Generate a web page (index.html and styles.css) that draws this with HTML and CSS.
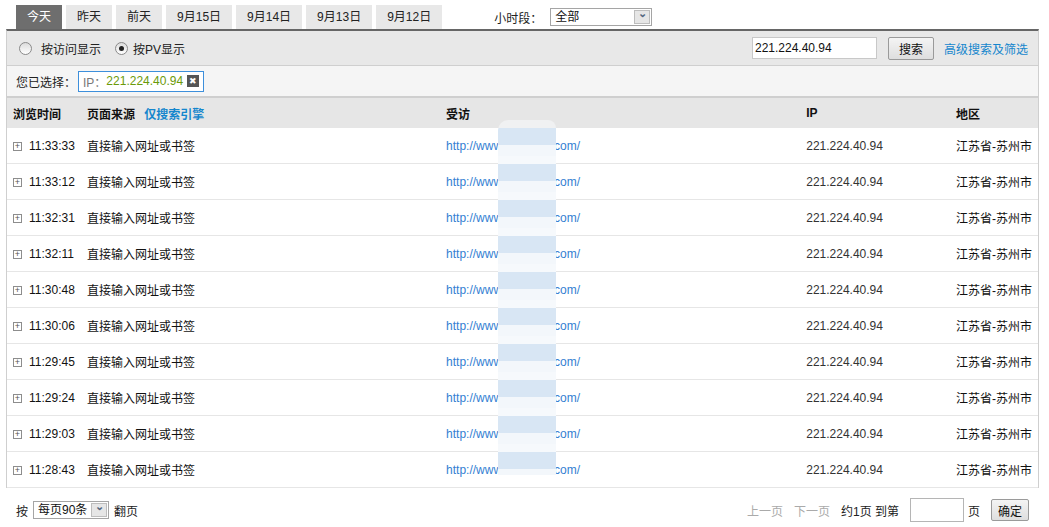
FILE: index.html
```html
<!DOCTYPE html>
<html lang="zh-CN">
<head>
  <meta charset="UTF-8" />
  <title>访问明细</title>
  <link rel="stylesheet" href="styles.css">
</head>
<body>
  <div class="tabs">
    <a href="#" class="tab active">今天</a>
    <a href="#" class="tab">昨天</a>
    <a href="#" class="tab">前天</a>
    <a href="#" class="tab">9月15日</a>
    <a href="#" class="tab">9月14日</a>
    <a href="#" class="tab">9月13日</a>
    <a href="#" class="tab">9月12日</a>
    <div class="hour">
      <span>小时段：</span>
      <div class="fake-select wide"><span class="val">全部</span><span class="arrow">&#x2304;</span></div>
    </div>
  </div>

  <div class="box">
    <div class="bar1">
      <label class="radio"><span class="dot"></span>按访问显示</label>
      <label class="radio on"><span class="dot"></span>按PV显示</label>
      <div class="search">
        <input type="text" class="kw" value="221.224.40.94">
        <button class="btn">搜索</button>
        <a href="#" class="adv">高级搜索及筛选</a>
      </div>
    </div>
    <div class="bar2">
      <span>您已选择：</span>
      <span class="chip"><span class="k">IP：</span><span class="v">221.224.40.94</span><span class="del">&#x2716;</span></span>
    </div>

    <div class="list">
      <table class="table">
        <thead>
          <tr>
            <th class="c1">浏览时间</th>
            <th class="c2">页面来源 <a href="#" class="se">仅搜索引擎</a></th>
            <th class="c3">受访</th>
            <th class="c4">IP</th>
            <th class="c5">地区</th>
          </tr>
        </thead>
        <tbody>
          <tr><td><span class="plus">+</span>11:33:33</td><td>直接输入网址或书签</td><td class="url">http://www<span class="gap"></span>com/</td><td class="ip">221.224.40.94</td><td>江苏省-苏州市</td></tr>
          <tr><td><span class="plus">+</span>11:33:12</td><td>直接输入网址或书签</td><td class="url">http://www<span class="gap"></span>com/</td><td class="ip">221.224.40.94</td><td>江苏省-苏州市</td></tr>
          <tr><td><span class="plus">+</span>11:32:31</td><td>直接输入网址或书签</td><td class="url">http://www<span class="gap"></span>com/</td><td class="ip">221.224.40.94</td><td>江苏省-苏州市</td></tr>
          <tr><td><span class="plus">+</span>11:32:11</td><td>直接输入网址或书签</td><td class="url">http://www<span class="gap"></span>com/</td><td class="ip">221.224.40.94</td><td>江苏省-苏州市</td></tr>
          <tr><td><span class="plus">+</span>11:30:48</td><td>直接输入网址或书签</td><td class="url">http://www<span class="gap"></span>com/</td><td class="ip">221.224.40.94</td><td>江苏省-苏州市</td></tr>
          <tr><td><span class="plus">+</span>11:30:06</td><td>直接输入网址或书签</td><td class="url">http://www<span class="gap"></span>com/</td><td class="ip">221.224.40.94</td><td>江苏省-苏州市</td></tr>
          <tr><td><span class="plus">+</span>11:29:45</td><td>直接输入网址或书签</td><td class="url">http://www<span class="gap"></span>com/</td><td class="ip">221.224.40.94</td><td>江苏省-苏州市</td></tr>
          <tr><td><span class="plus">+</span>11:29:24</td><td>直接输入网址或书签</td><td class="url">http://www<span class="gap"></span>com/</td><td class="ip">221.224.40.94</td><td>江苏省-苏州市</td></tr>
          <tr><td><span class="plus">+</span>11:29:03</td><td>直接输入网址或书签</td><td class="url">http://www<span class="gap"></span>com/</td><td class="ip">221.224.40.94</td><td>江苏省-苏州市</td></tr>
          <tr><td><span class="plus">+</span>11:28:43</td><td>直接输入网址或书签</td><td class="url">http://www<span class="gap"></span>com/</td><td class="ip">221.224.40.94</td><td>江苏省-苏州市</td></tr>
        </tbody>
      </table>
      <!-- 打码区域 -->
      <div class="blur"></div>
    </div>
  </div>

  <div class="footer">
    <div class="per">
      <span>按</span>
      <div class="fake-select small"><span class="val">每页90条</span><span class="arrow">&#x2304;</span></div>
      <span>翻页</span>
    </div>
    <div class="pager">
      <span class="off">上一页</span>
      <span class="off">下一页</span>
      <span>约1页 到第</span>
      <input type="text" class="pg">
      <span>页</span>
      <button class="btn ok">确定</button>
    </div>
  </div>
</body>
</html>
```

FILE: styles.css
```css
body {
  margin: 0; font-family: "Liberation Sans", Arial, "Noto Sans CJK SC", sans-serif;
  font-size: 12px; color: #222; background: white;
}
a { text-decoration: none; }

.tabs {
  display: flex; align-items: flex-end; gap: 4px;
  padding: 5px 0 0 16px; height: 24px;
}
.tab {
  height: 24px; line-height: 24px; padding: 0 11px; background: #e8e8e8;
  color: #222; font-size: 12px;
}
.tab.active { background: #6e6e6e; color: white; }
.hour {
  display: flex; align-items: center; gap: 8px; margin-left: 48px;
  align-self: flex-start; margin-top: 3px;
}

.fake-select {
  display: flex; align-items: center; height: 16px; border: 1px solid #a5a5a5;
  background: white; box-sizing: content-box;
}
.fake-select .val { flex: 1; padding-left: 4px; color: #111; line-height: 16px; }
.fake-select .arrow {
  width: 16px; height: 14px; margin-right: 1px; background: #e6e6e6; border: 1px solid #bdbdbd;
  box-sizing: border-box; color: #55677f; font-size: 11px; line-height: 5px; text-align: center;
  font-weight: bold;
}
.fake-select.wide { width: 100px; }
.fake-select.small { width: 74px; }

.box {
  margin-left: 6px; width: 1033px; box-sizing: border-box;
  border-top: 2px solid #666; border-left: 1px solid #cfcfcf; border-right: 1px solid #cfcfcf;
}
.bar1 {
  height: 34px; background: #e8e8e8; border-bottom: 1px solid #cfcfcf;
  display: flex; align-items: center; padding-left: 12px;
}
.radio { display: flex; align-items: center; color: #222; margin-right: 14px; }
.radio .dot {
  width: 11px; height: 11px; border: 1px solid #8a8a8a; border-radius: 50%;
  background: linear-gradient(#dcdcdc, #fff); margin-right: 9px; position: relative;
}
.radio.on .dot { margin-right: 5px; }
.radio.on .dot::after {
  content: ""; position: absolute; left: 3px; top: 3px; width: 5px; height: 5px;
  border-radius: 50%; background: #222;
}
.search { margin-left: auto; display: flex; align-items: center; padding-right: 10px; }
.kw {
  width: 125px; height: 22px; box-sizing: border-box; border: 1px solid #c8c8c8;
  padding: 0 2px; font: 12px "Liberation Sans", Arial, sans-serif; color: #111; margin-right: 11px;
}
.btn {
  height: 23px; padding: 0 10px; border: 1px solid #9a9a9a; border-radius: 2px;
  background: linear-gradient(#f4f4f4, #dedede); color: #111; cursor: pointer;
  font: 12px "Liberation Sans", "Noto Sans CJK SC", sans-serif;
}
.adv { color: #1586cd; margin-left: 10px; font-size: 12px; }

.bar2 {
  height: 30px; background: #f5f5f5; border-bottom: 2px solid #cfcfcf;
  display: flex; align-items: center; padding-left: 9px;
}
.chip {
  display: flex; align-items: center; height: 19px; border: 1px solid #3d8fdb;
  background: white; padding: 0 4px; margin-left: 2px;
}
.chip .k { color: #777; }
.chip .v { color: #6b9a0a; }
.chip .del {
  width: 12px; height: 12px; background: #555; color: white; font-size: 9px;
  line-height: 12px; text-align: center; margin-left: 4px;
}

.list { position: relative; }
.table { width: 100%; border-collapse: collapse; }
.table th {
  height: 30px; background: #e6e6e6; text-align: left; font-weight: bold;
  padding: 0 6px; color: #111;
}
.table td {
  height: 35px; border-bottom: 1px solid #e6e6e6; padding: 0 6px; color: #111;
  white-space: nowrap;
}
.table .c1 { width: 62px; }
.table .c2 { width: 348px; }
.table .c3 { width: 349px; }
.table .c4 { width: 138px; }
.se { color: #1586cd; margin-left: 6px; }
.plus {
  display: inline-block; width: 9px; height: 9px; border: 1px solid #8d8d8d;
  box-sizing: border-box; font-size: 9px; line-height: 6px; text-align: center;
  color: #555; margin-right: 7px; vertical-align: 1px;
}
.table td.url { color: #3480d2; }
.gap { display: inline-block; width: 52px; }
.table td.ip { color: #333; }
.blur {
  position: absolute; left: 491px; top: 22px; width: 58px; height: 355px;
  border-radius: 10px 8px 0 0;
  background:
    linear-gradient(#f0f1f2, #f0f1f2) 0 0 / 100% 8px no-repeat,
    repeating-linear-gradient(#f6f9fc 0, #f6f9fc 8px, #d8e6f4 8px, #d8e6f4 25px, #f3f7fb 25px, #f3f7fb 36px);
}

.footer {
  display: flex; justify-content: space-between; align-items: center;
  padding: 10px 20px 0 16px; height: 24px;
}
.per { display: flex; align-items: center; gap: 5px; }
.pager { display: flex; align-items: center; gap: 11px; }
.pager .off { color: #aaa; }
.pg {
  width: 54px; height: 24px; box-sizing: border-box; border: 1px solid #b5b5b5; margin: 0 -7px 0 0;
}
.ok { height: 22px; padding: 0 6px; margin-left: 0; }
```
